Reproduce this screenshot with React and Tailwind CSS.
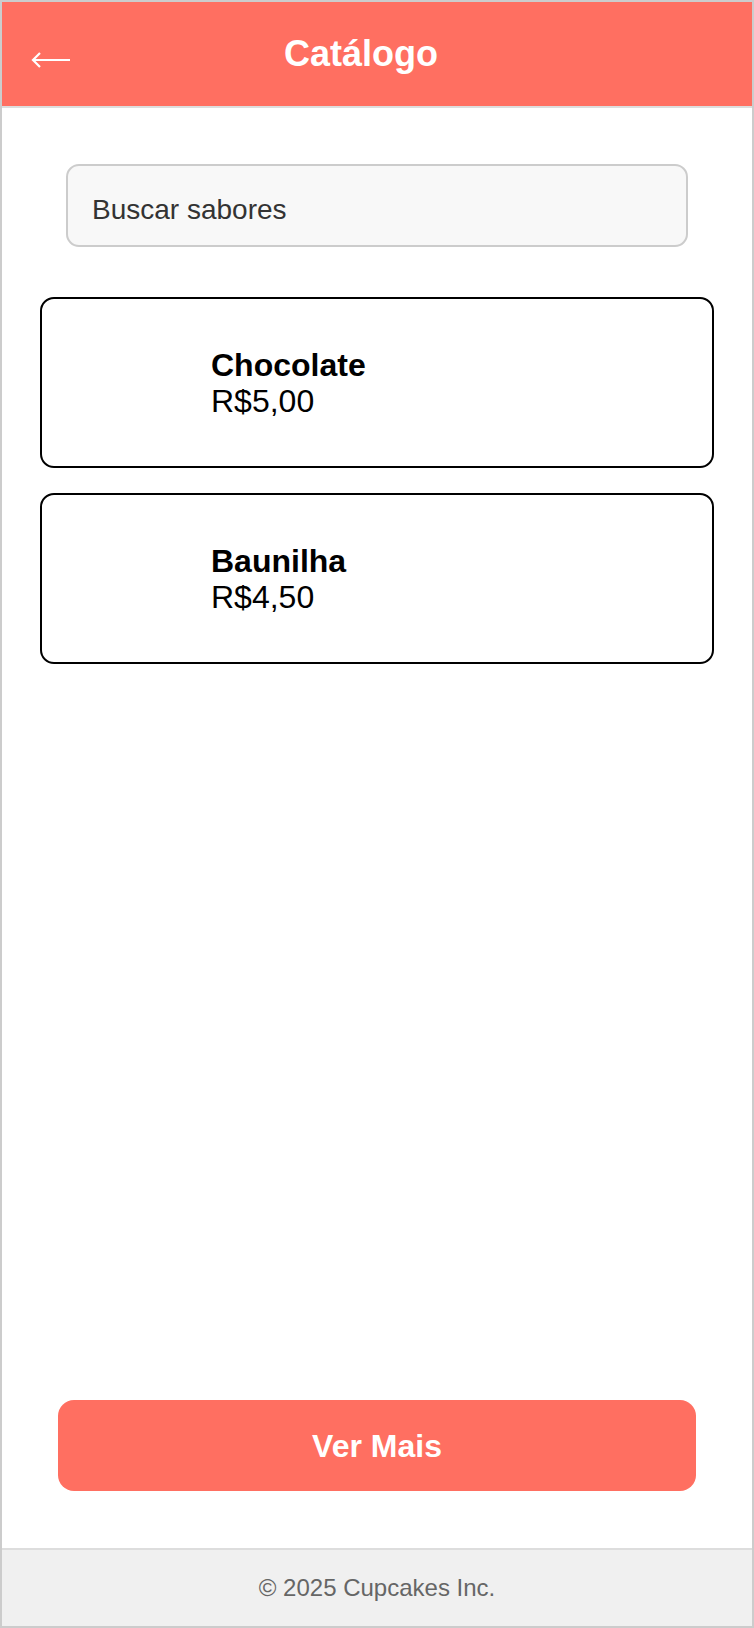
import React from "react";

function Card({ name, price }) {
  return (
    <div className="h-[171px] border-2 border-black rounded-[14px] flex items-center pl-[169px]">
      <div className="flex flex-col">
        <span className="text-[32px] font-bold leading-[36px] text-black">{name}</span>
        <span className="text-[32px] leading-[36px] text-black">{price}</span>
      </div>
    </div>
  );
}

export default function App() {
  return (
    <div
      className="w-[754px] h-[1628px] border-2 border-[#ccc] flex flex-col bg-white"
      style={{ fontFamily: '"Liberation Sans", Arial, sans-serif' }}
    >
      <header className="relative h-[106px] shrink-0 bg-[#ff6f61] border-b-2 border-[#ddd] flex items-center justify-center">
        <svg
          className="absolute left-[29px] top-[49px]"
          width="40"
          height="18"
          viewBox="0 0 40 18"
          fill="none"
          stroke="white"
          strokeWidth="2.2"
          strokeLinecap="butt"
        >
          <path d="M2 9 H39" />
          <path d="M9 2 L2 9 L9 16" />
        </svg>
        <h1 className="text-white text-[36px] font-bold leading-none mr-[32px]">Catálogo</h1>
      </header>
      <main className="flex-1 flex flex-col px-[38px]">
        <div className="mt-[56px] mx-[26px] h-[83px] rounded-[13px] border-2 border-[#ccc] bg-[#f8f8f8] flex items-center pl-[24px] pt-[8px] text-[28px] text-[#333]">
          Buscar sabores
        </div>
        <div className="mt-[50px] flex flex-col gap-[25px]">
          <Card name="Chocolate" price="R$5,00" />
          <Card name="Baunilha" price="R$4,50" />
        </div>
        <div className="flex-1" />
        <button className="mx-[18px] mb-[57px] h-[91px] rounded-[16px] bg-[#ff6f61] text-white text-[32px] font-bold">
          Ver Mais
        </button>
      </main>
      <footer className="h-[78px] shrink-0 border-t-2 border-[#ddd] bg-[#f0f0f0] flex items-center justify-center text-[24px] text-[#666]">
        © 2025 Cupcakes Inc.
      </footer>
    </div>
  );
}
